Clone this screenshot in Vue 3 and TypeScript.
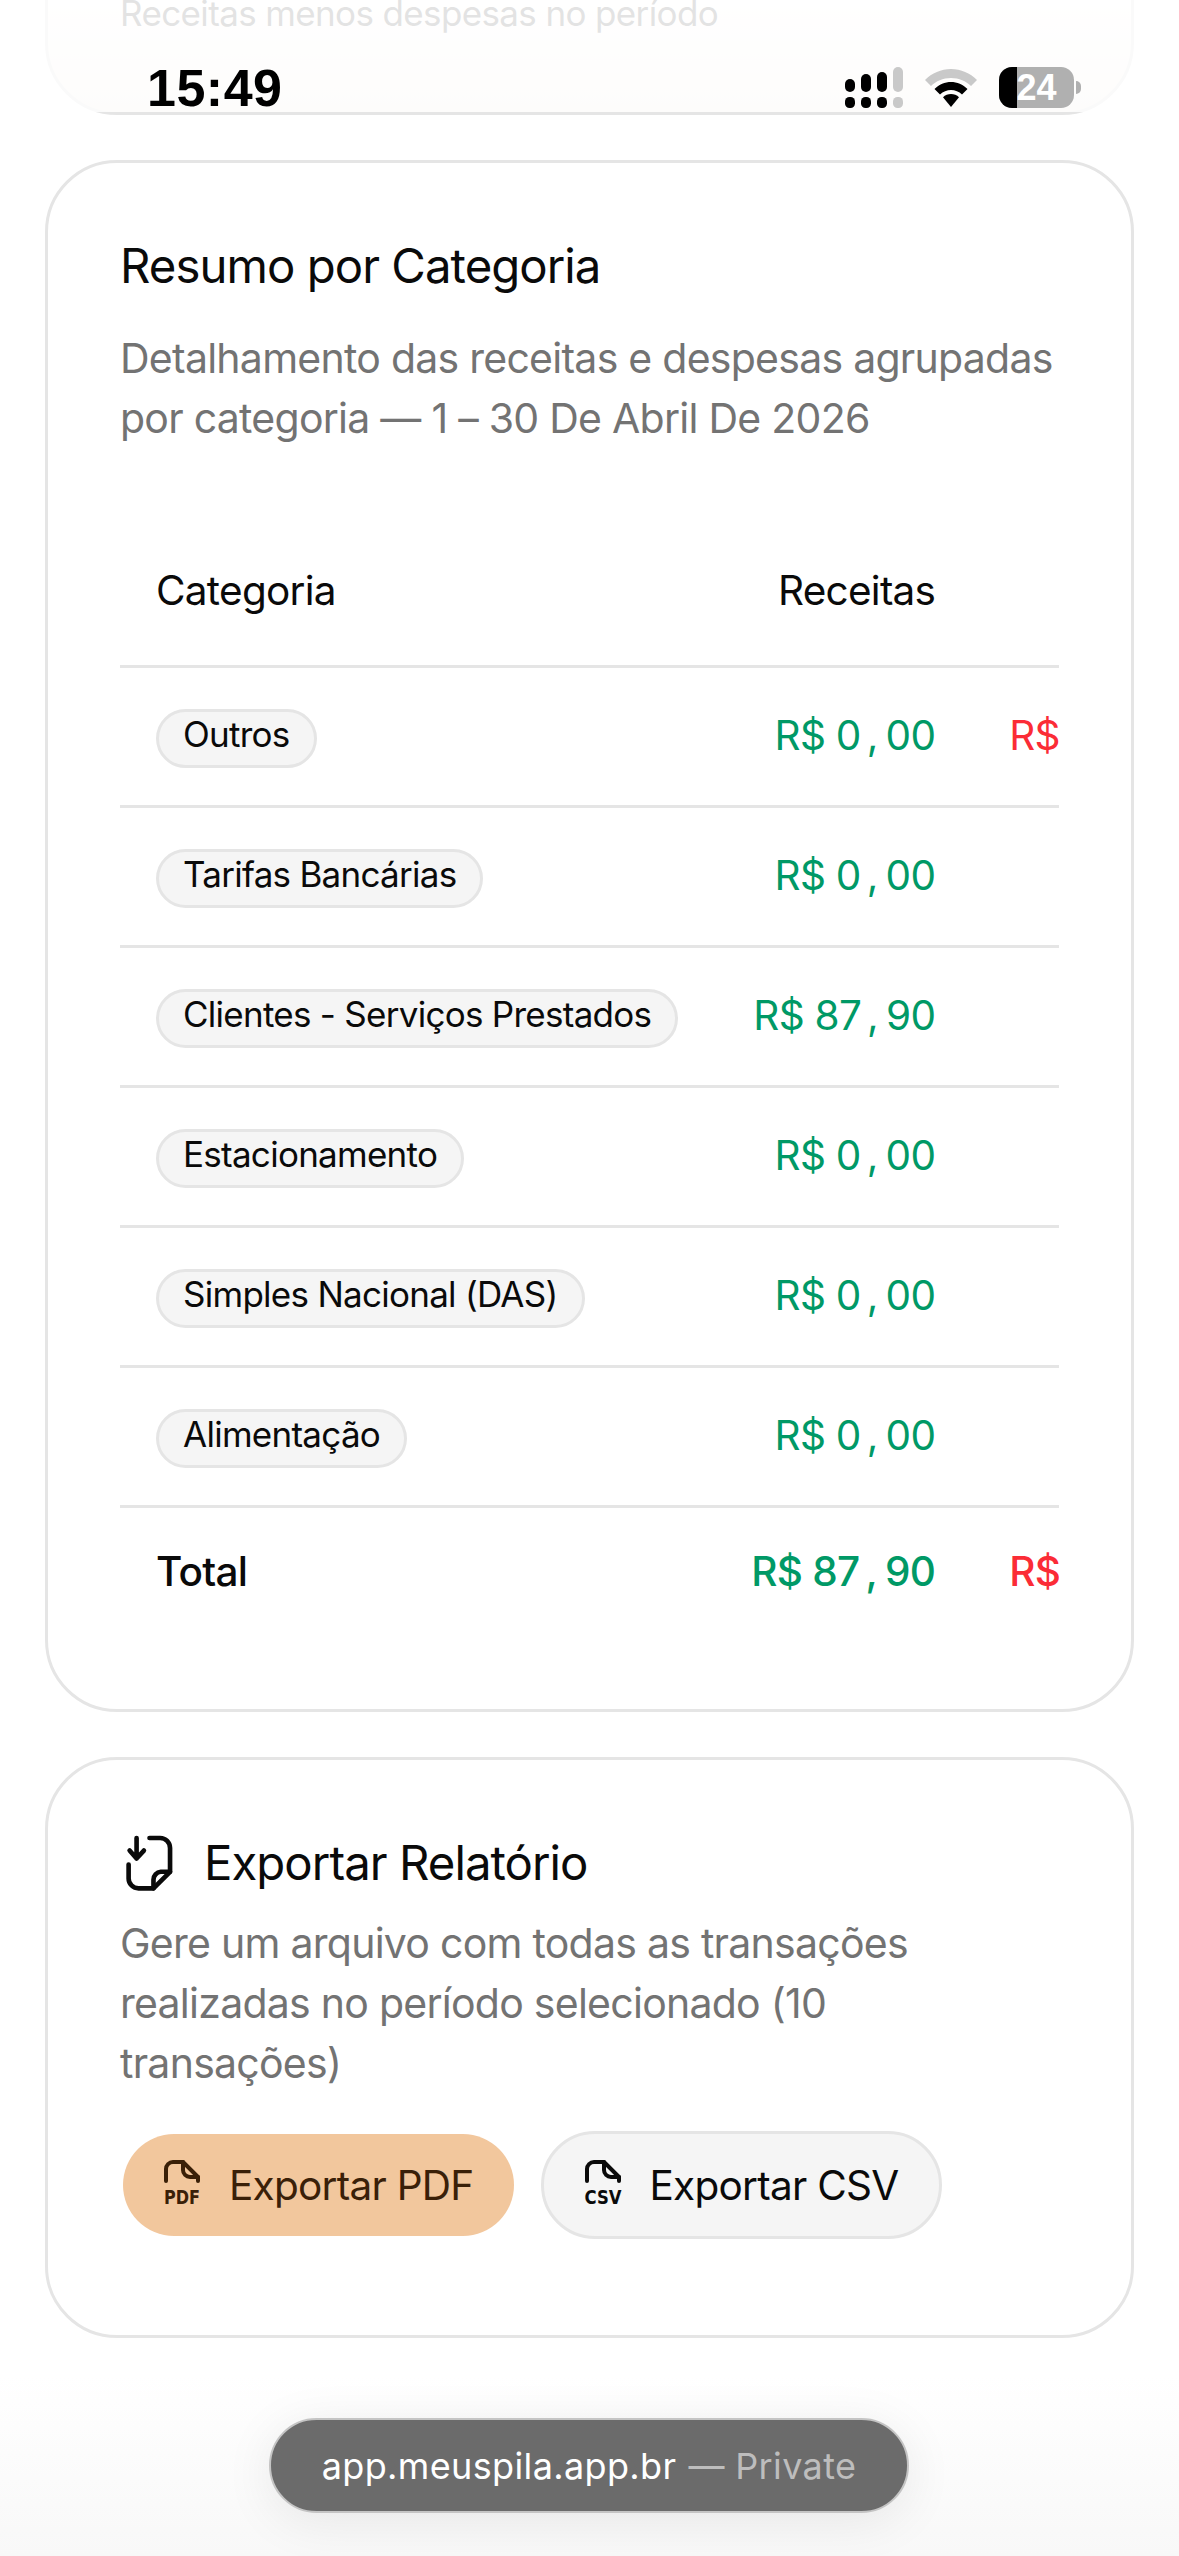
<script setup lang="ts">
interface Row {
  name: string;
  income: string;
  expense?: string;
}

const rows: Row[] = [
  { name: "Outros", income: "R$ 0,00", expense: "R$" },
  { name: "Tarifas Bancárias", income: "R$ 0,00" },
  { name: "Clientes - Serviços Prestados", income: "R$ 87,90" },
  { name: "Estacionamento", income: "R$ 0,00" },
  { name: "Simples Nacional (DAS)", income: "R$ 0,00" },
  { name: "Alimentação", income: "R$ 0,00" },
];

const signalBars = [
  { x: 0, y: 12, h: 13, on: true },
  { x: 16, y: 7, h: 18, on: true },
  { x: 32, y: 5, h: 20, on: true },
  { x: 48, y: 0, h: 25, on: false },
];
</script>

<template>
  <div class="screen">
    <main class="page">
      <section class="card card-top">
        <p class="muted top-text">Receitas menos despesas no período</p>
      </section>

      <section class="card">
        <h2 class="title">Resumo por Categoria</h2>
        <p class="muted summary">
          Detalhamento das receitas e despesas agrupadas por categoria — 1 – 30 De Abril De 2026
        </p>

        <div class="table-wrap">
          <table>
            <thead>
              <tr>
                <th>Categoria</th>
                <th class="num">Receitas</th>
                <th class="num"></th>
              </tr>
            </thead>
            <tbody>
              <tr v-for="row in rows" :key="row.name">
                <td><span class="chip">{{ row.name }}</span></td>
                <td class="num income">{{ row.income.split(",")[0] }}<span class="comma">,</span>{{ row.income.split(",")[1] }}</td>
                <td class="expense">{{ row.expense }}</td>
              </tr>
            </tbody>
            <tfoot>
              <tr>
                <td>Total</td>
                <td class="num income total-value">R$ 87<span class="comma">,</span>90</td>
                <td class="expense total-value">R$</td>
              </tr>
            </tfoot>
          </table>
        </div>
      </section>

      <section class="card card-export">
        <div class="export-head">
          <svg class="export-icon" viewBox="80 110 140 175" fill="none" stroke="currentColor" stroke-width="14"
            stroke-linecap="round" stroke-linejoin="round">
            <path d="M150 122h32a30 30 0 0 1 30 30v72l-50 50h-45a30 30 0 0 1-30-30v-42" />
            <path d="M212 224h-28a24 24 0 0 0-22 24v26" />
            <path d="M111 122v62M90 160l21 24 22-24" />
          </svg>
          <h2 class="title">Exportar Relatório</h2>
        </div>
        <p class="muted export-text">
          Gere um arquivo com todas as transações realizadas no período selecionado (10 transações)
        </p>
        <div class="actions">
          <button class="btn btn-pdf" type="button">
            <svg class="file-icon" viewBox="0 0 38 50" fill="none" stroke="currentColor" stroke-width="4"
              stroke-linecap="round" stroke-linejoin="round">
              <path d="M3 21V9a7 7 0 0 1 7-7h10l15 15v4" />
              <path d="M20 2v8a7 7 0 0 0 7 7h8" />
              <text x="19" y="44" text-anchor="middle" textLength="36" lengthAdjust="spacingAndGlyphs"
                class="file-label">PDF</text>
            </svg>
            Exportar PDF
          </button>
          <button class="btn btn-csv" type="button">
            <svg class="file-icon" viewBox="0 0 38 50" fill="none" stroke="currentColor" stroke-width="4"
              stroke-linecap="round" stroke-linejoin="round">
              <path d="M3 21V9a7 7 0 0 1 7-7h10l15 15v4" />
              <path d="M20 2v8a7 7 0 0 0 7 7h8" />
              <text x="19" y="44" text-anchor="middle" textLength="37" lengthAdjust="spacingAndGlyphs"
                class="file-label">CSV</text>
            </svg>
            Exportar CSV
          </button>
        </div>
      </section>
    </main>

    <header class="status">
      <span class="clock">15:49</span>
      <div class="status-icons">
        <svg class="signal" width="58" height="41" viewBox="0 0 58 41">
          <rect v-for="bar in signalBars" :key="bar.x" :x="bar.x" :y="bar.y" width="10" :height="bar.h" rx="5"
            :fill="bar.on ? '#000' : '#c9c9c9'" />
          <rect v-for="bar in signalBars" :key="'d' + bar.x" :x="bar.x" y="30" width="10" height="11" rx="4.5"
            :fill="bar.on ? '#000' : '#c9c9c9'" />
        </svg>
        <svg class="wifi" width="52" height="38" viewBox="0 0 52 38">
          <path d="M26 0C16 0 7 4 0 11l6 6C11 12 18 9 26 9s15 3 20 8l6-6C45 4 36 0 26 0z" fill="#c9c9c9" />
          <path d="M26 13c-6 0-12 2.500-16.500 7l5.500 5.500C18 22.500 22 21 26 21s8 1.500 11 4.500l5.500-5.500C38 15.500 32 13 26 13z" />
          <path d="M26 25c-3 0-5.800 1.200-8 3.200L26 38l8-9.800C31.800 26.200 29 25 26 25z" />
        </svg>
        <div class="battery">
          <span class="battery-level"></span>
          <span class="battery-text">24</span>
        </div>
        <span class="battery-nub"></span>
      </div>
    </header>

    <div class="address">
      <span>app.meuspila.app.br</span>
      <span class="address-private">— Private</span>
    </div>
  </div>
</template>

<style scoped>
.screen {
  position: relative;
  height: 2556px;
  overflow: hidden;
  background: #fff;
  color: #0a0a0a;
  font-family: Inter, "Liberation Sans", sans-serif;
}

.screen::after {
  content: "";
  position: absolute;
  left: 0;
  right: 0;
  bottom: 0;
  height: 180px;
  background: linear-gradient(rgba(245, 245, 245, 0), rgba(245, 245, 245, 0.7));
  pointer-events: none;
}

.page {
  display: flex;
  flex-direction: column;
  gap: 45px;
  padding: 0 45px;
}

.card {
  border: 3px solid #e5e5e5;
  border-radius: 72px;
  padding: 72px;
  background: #fff;
}

.card-top {
  height: 215px;
  margin-top: -100px;
  padding-top: 80px;
  box-sizing: border-box;
  background: linear-gradient(#fff 40%, #f5f0eb);
}

.top-text {
  font-size: 35px;
}

.title {
  margin: 0;
  font-size: 47.300px;
  line-height: 62px;
  font-weight: 400;
  letter-spacing: -0.02em;
}

.muted {
  margin: 0;
  color: #737373;
  line-height: 60px;
  letter-spacing: -0.018em;
}

.summary,
.export-text {
  font-size: 41px;
}

.summary {
  margin-top: 31px;
}

.table-wrap {
  margin-top: 71px;
  overflow: hidden;
}

table {
  border-collapse: collapse;
  font-size: 40.500px;
  letter-spacing: -0.018em;
  white-space: nowrap;
}

th,
td {
  padding: 0 36px 3px;
}

th {
  height: 143px;
  font-weight: 400;
  text-align: left;
  border-bottom: 3px solid #e5e5e5;
}

tbody td {
  height: 134px;
  border-bottom: 3px solid #e5e5e5;
}

tfoot td {
  height: 126px;
  font-weight: 500;
}

tfoot .total-value {
  font-weight: 550;
}

.num {
  text-align: right;
}

.comma {
  margin: 0 8px 0 6px;
}

th.num {
  min-width: 186px;
}

td:first-child,
th:first-child {
  min-width: 521px;
  padding-right: 35px;
}

.income {
  color: #009966;
}

.expense {
  min-width: 200px;
  padding-left: 38px;
  color: #fb2c36;
}

.chip {
  display: inline-block;
  margin-top: 6px;
  padding: 0 24px 8px;
  border: 3px solid #e5e5e5;
  border-radius: 30px;
  background: #f5f5f5;
  font-size: 35px;
  line-height: 45px;
  font-weight: 400;
  vertical-align: middle;
}

.card-export {
  padding-top: 71px;
  padding-bottom: 96px;
}

.export-head {
  display: flex;
  align-items: center;
  gap: 31px;
  height: 63px;
}

.export-icon {
  width: 47px;
  height: 58px;
  margin-left: 6px;
  flex: none;
}

.export-text {
  max-width: 900px;
  margin-top: 19px;
}

.actions {
  display: flex;
  gap: 24px;
  margin-top: 38px;
}

.btn {
  display: flex;
  align-items: center;
  gap: 28px;
  height: 108px;
  padding: 0 40px;
  border: 3px solid #e5e5e5;
  border-radius: 54px;
  font-family: inherit;
  font-size: 40.500px;
  letter-spacing: -0.018em;
}

.btn-pdf {
  border-color: transparent;
  background: #f2c79d;
  background-clip: padding-box;
  color: #3a2008;
}

.btn-csv {
  background: #f5f5f5;
  color: #0a0a0a;
}

.file-icon {
  width: 38px;
  height: 50px;
  flex: none;
}

.file-label {
  font-family: "DejaVu Sans Condensed", "DejaVu Sans", sans-serif;
  font-weight: 700;
  font-size: 20px;
  fill: currentColor;
  stroke: none;
  letter-spacing: 0;
}

.status {
  position: absolute;
  top: 0;
  left: 0;
  right: 0;
  height: 112px;
  display: flex;
  align-items: center;
  justify-content: space-between;
  padding: 63px 98px 0 147px;
  box-sizing: border-box;
  background: rgba(255, 255, 255, 0.8);
}

.clock {
  font-family: "Liberation Sans", sans-serif;
  font-size: 52px;
  line-height: 50px;
  font-weight: 700;
  letter-spacing: 0.5px;
  color: #000;
}

.status-icons {
  display: flex;
  align-items: center;
}

.signal {
  margin-right: 22px;
}

.wifi {
  margin-right: 22px;
}

.battery {
  position: relative;
  width: 75px;
  height: 41px;
  border-radius: 13px;
  background: #b0b0b0;
  overflow: hidden;
}

.battery-level {
  position: absolute;
  inset: 0 auto 0 0;
  width: 18px;
  background: #000;
}

.battery-text {
  position: absolute;
  inset: 0;
  display: flex;
  align-items: center;
  justify-content: center;
  color: #fff;
  font-family: "Liberation Sans", sans-serif;
  font-size: 36px;
  font-weight: 700;
}

.battery-nub {
  width: 5px;
  height: 13px;
  margin-left: 2px;
  border-radius: 0 6px 6px 0;
  background: #b0b0b0;
}

.address {
  position: absolute;
  left: 269px;
  top: 2418px;
  z-index: 1;
  width: 640px;
  height: 95px;
  display: flex;
  align-items: center;
  justify-content: center;
  gap: 12px;
  box-sizing: border-box;
  border: 2px solid #c4c4c4;
  border-radius: 48px;
  background: #6b6b6b;
  box-shadow: 0 8px 50px rgba(0, 0, 0, 0.08);
  color: #fff;
  font-size: 36px;
  letter-spacing: 0.01em;
}

.address-private {
  color: #bdbdbd;
}
</style>

<style>
html,
body {
  margin: 0;
  background: #fff;
}
</style>
